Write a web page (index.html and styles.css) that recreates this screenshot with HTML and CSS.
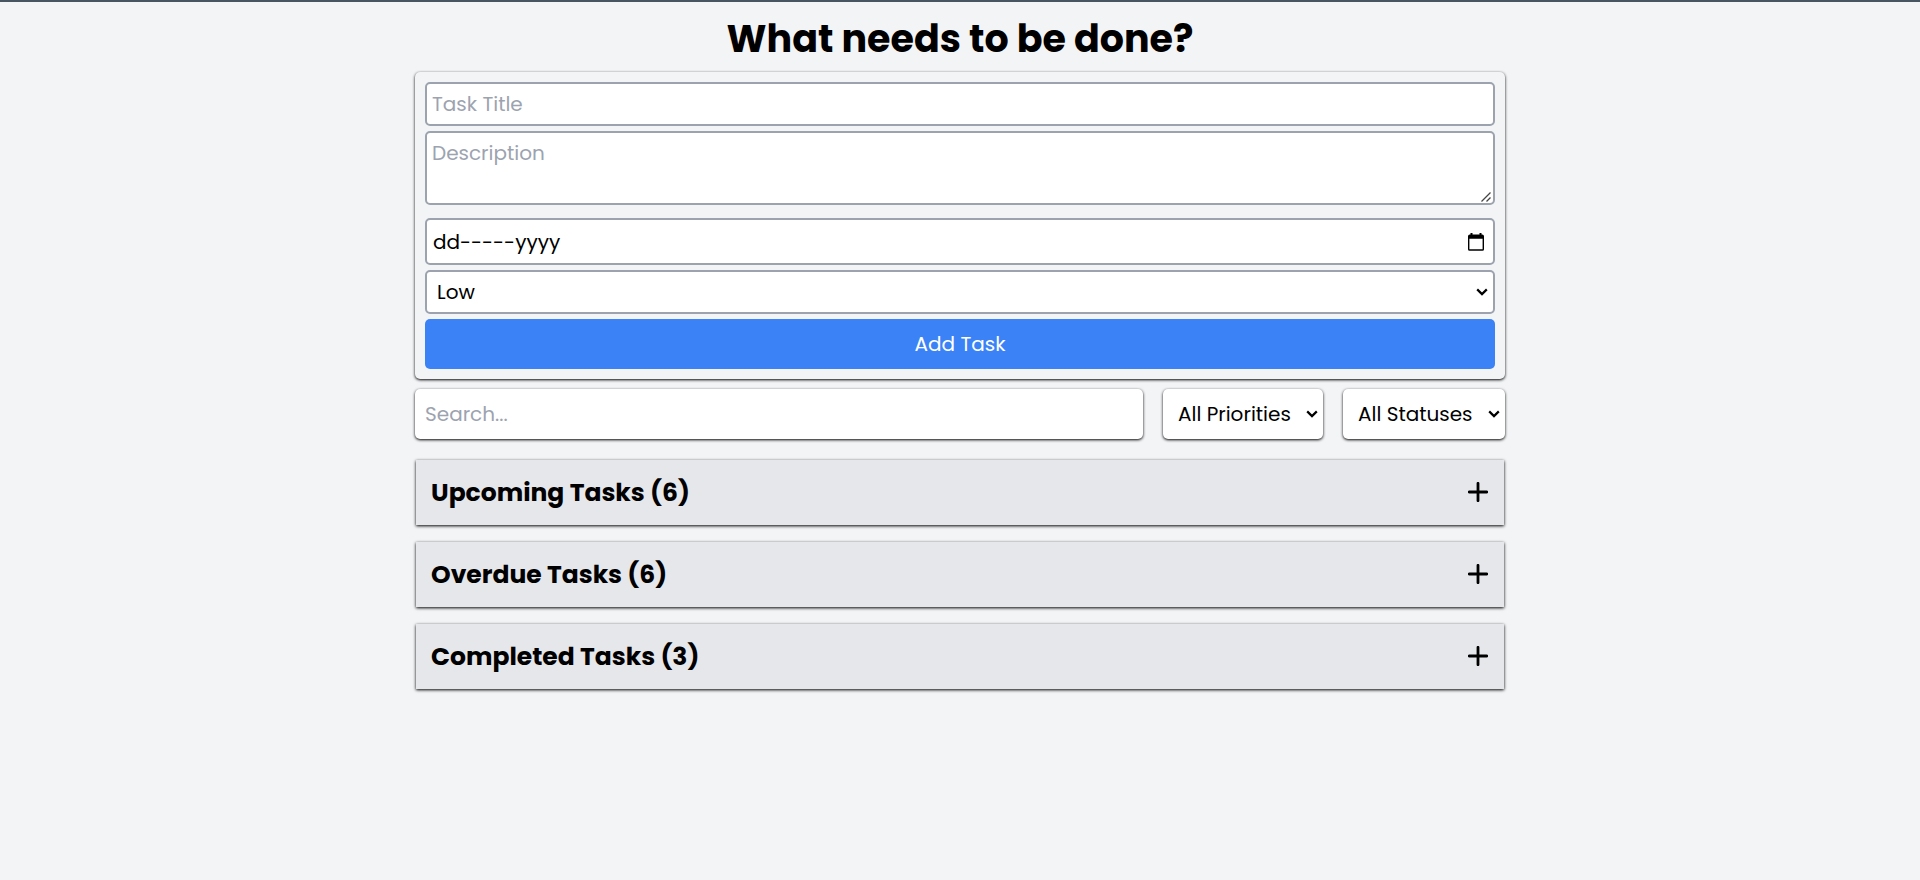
FILE: index.html
```html
<!DOCTYPE html>
<html lang="en">
<head>
<meta charset="utf-8">
<meta name="viewport" content="width=device-width, initial-scale=1">
<title>Tasks</title>
<link rel="stylesheet" href="styles.css">
</head>
<body>
<svg class="defs" aria-hidden="true">
  <symbol id="chevron" viewBox="0 0 12 8"><path d="M1.2 1.4 6 6.1l4.800-4.700" fill="none" stroke="currentColor" stroke-width="2.200"/></symbol>
  <symbol id="plus" viewBox="0 0 20 20"><path d="M10 1.300v17.400M1.300 10h17.400" fill="none" stroke="currentColor" stroke-width="2.800" stroke-linecap="round"/></symbol>
</svg>
<main class="page">
  <h1 class="title">What needs to be done?</h1>
  <form class="task-form">
    <input class="field" type="text" placeholder="Task Title" aria-label="Task title">
    <div class="stack notes">
      <textarea class="field field-notes" placeholder="Description" aria-label="Description"></textarea>
      <svg class="grip" viewBox="0 0 10 10" aria-hidden="true"><path d="M.5 9.500 9.500.5M5.500 9.500l4-4" fill="none" stroke="#444" stroke-width="1.300"/></svg>
    </div>
    <div class="stack">
      <input class="field field-date" type="text" value="dd-----yyyy" aria-label="Due date">
      <button class="picker" type="button" aria-label="Open calendar">
        <svg class="calendar" viewBox="0 0 16 18" aria-hidden="true"><path fill-rule="evenodd" d="M2.500 0h2v1.500h7V0h2v1.500h.7a1.800 1.800 0 0 1 1.800 1.800v12.900a1.500 1.500 0 0 1-1.500 1.500h-13A1.500 1.500 0 0 1 0 16.200V3.300a1.800 1.800 0 0 1 1.800-1.800h.7zM1.400 5.700v10.600h13.200V5.700z" fill="currentColor"/></svg>
      </button>
    </div>
    <div class="stack">
      <select class="field field-select" aria-label="Priority"><option>Low</option><option>Medium</option><option>High</option></select>
      <svg class="chevron" aria-hidden="true"><use href="#chevron"/></svg>
    </div>
    <button class="add" type="submit">Add Task</button>
  </form>
  <div class="filters">
    <input class="filter search" type="search" placeholder="Search..." aria-label="Search tasks">
    <div class="stack">
      <select class="filter filter-select" aria-label="Filter by priority"><option>All Priorities</option></select>
      <svg class="chevron" aria-hidden="true"><use href="#chevron"/></svg>
    </div>
    <div class="stack">
      <select class="filter filter-select" aria-label="Filter by status"><option>All Statuses</option></select>
      <svg class="chevron" aria-hidden="true"><use href="#chevron"/></svg>
    </div>
  </div>
  <section class="groups">
    <button class="group" type="button" aria-expanded="false"><span>Upcoming Tasks (6)</span><svg class="plus" aria-hidden="true"><use href="#plus"/></svg></button>
    <button class="group" type="button" aria-expanded="false"><span>Overdue Tasks (6)</span><svg class="plus" aria-hidden="true"><use href="#plus"/></svg></button>
    <button class="group" type="button" aria-expanded="false"><span>Completed Tasks (3)</span><svg class="plus" aria-hidden="true"><use href="#plus"/></svg></button>
  </section>
</main>
</body>
</html>
```

FILE: styles.css
```css
* { box-sizing: border-box; }
body {
  margin: 0;
  min-height: 100vh;
  border-top: 2px solid #475563;
  background: #f3f4f6;
  color: #000;
  font: 20px/30px Poppins, Inter, sans-serif;
}
input, select, textarea, button { margin: 0; font: inherit; color: inherit; }
.defs { position: absolute; width: 0; height: 0; }
.page { max-width: 1090px; margin: 0 auto; padding: 10px 0; }
.title { margin: 0; font-size: 38px; line-height: 54px; font-weight: 700; text-align: center; }

.task-form {
  display: grid;
  gap: 5px;
  margin-top: 6px;
  padding: 10px;
  border-radius: 5px;
  box-shadow: 0 1px 3px #000;
  background: #f3f4f6;
}
.stack { display: grid; align-items: center; }
.stack > * { grid-area: 1 / 1; }
.field {
  width: 100%;
  padding: 5px;
  border: 2px solid #9ca3af;
  border-radius: 5px;
  background: #fff;
}
.field::placeholder, .filter::placeholder { color: #9ca3af; opacity: 1; }
.notes { margin-bottom: 8px; }
.field-notes { display: block; height: 74px; resize: vertical; }
.field-notes::-webkit-resizer { background: transparent; }
.grip { width: 10px; height: 10px; margin: 0 4px 3px 0; place-self: end; pointer-events: none; }
.field-date { height: 47px; padding-left: 6px; }
.picker { justify-self: end; display: flex; margin-right: 11px; padding: 0; border: 0; background: none; }
.calendar { width: 16px; height: 18px; }
.field-select { height: 44px; padding: 0 10px; appearance: none; }
.chevron { width: 12px; height: 8px; margin-right: 7px; justify-self: end; pointer-events: none; }
.add { padding: 10px; border: 0; border-radius: 5px; background: #3b82f6; color: #fff; }

.filters { display: grid; grid-template-columns: 1fr 160px 162px; gap: 20px; margin-top: 10px; }
.filter {
  width: 100%;
  height: 50px;
  padding: 10px;
  border: 0;
  border-radius: 5px;
  background: #fff;
  box-shadow: 0 1px 3px #000;
  appearance: none;
}
.filter-select { padding: 0 15px; }
.filters .chevron { margin-right: 5px; }

.groups { display: grid; gap: 17px; margin-top: 21px; padding: 0 1px; }
.group {
  display: flex;
  align-items: center;
  justify-content: space-between;
  height: 65px;
  padding: 0 16px 0 15px;
  border: 0;
  background: #e5e7eb;
  box-shadow: 0 1px 3px #000;
  font-size: 25px;
  font-weight: 700;
}
.plus { width: 20px; height: 20px; margin-bottom: 2px; }
```
